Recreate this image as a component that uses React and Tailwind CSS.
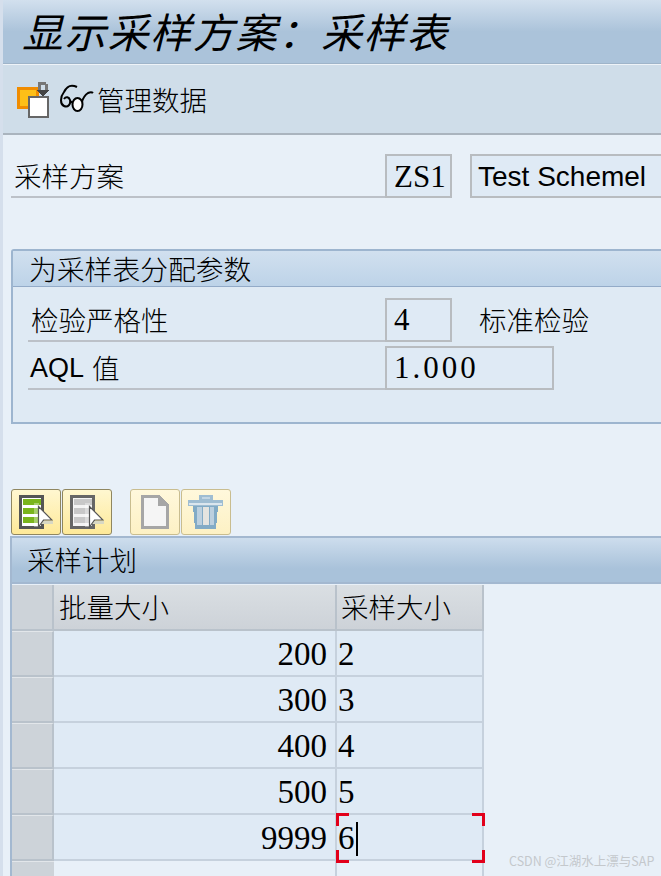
const cjk = { fontFamily: '"Noto Sans CJK SC", sans-serif' };

function Cjk({ className = "", children }) {
  return (
    <span className={`font-['Noto_Sans_CJK_SC',sans-serif] font-light ${className}`}>{children}</span>
  );
}

function CreateIcon() {
  return (
    <svg width="36" height="37" viewBox="0 0 36 37" shapeRendering="crispEdges" className="shrink-0">
      <rect x="2" y="7" width="19" height="19" fill="#fdbf17" stroke="#f08c00" strokeWidth="3" />
      <rect x="13" y="16" width="19" height="20" fill="#fff" stroke="#666" strokeWidth="2.5" />
      <path d="M22 1h8v2h2v6h-3V4h-4v5h-3V3h0z" fill="#777" />
      <path d="M20 9h13l-6 6z" fill="#444" />
    </svg>
  );
}

function GlassesIcon() {
  return (
    <svg width="36" height="30" viewBox="0 0 36 30" fill="none" stroke="#000" strokeWidth="2" className="shrink-0">
      <path d="M18 3C12 0 8 2 5 8C1 13 1 20 5 22C9 24 12 20 11 16C10 13 7 12 5 15" />
      <path d="M11 17l3 2" />
      <ellipse cx="18.5" cy="20.5" rx="5" ry="6.5" fill="#fff" />
      <path d="M23 18c1-4 3-7 6-9 2-1 4-1 5 0" />
    </svg>
  );
}

function TableIcon({ green }) {
  const bar = green ? "#7ab51d" : "#c8c8c8";
  return (
    <svg width="34" height="34" viewBox="0 0 34 34" shapeRendering="crispEdges">
      <rect x="1.25" y="1.25" width="22" height="31" fill={green ? "#fff" : "#f4f4f4"} stroke={green ? "#555" : "#666"} strokeWidth="2.5" />
      <rect x="4" y="4" width="18" height="6" fill={bar} />
      <rect x="4" y="13" width="18" height="6" fill={bar} />
      <rect x="4" y="22" width="18" height="6" fill={bar} />
      <rect x="15" y="8" width="5" height="24" fill="#fff" opacity="0.35" />
      <path d="M22 26h12v3H22z" fill="#d8d8c4" />
      <path d="M19.5 11.5L33 25H24.5L19.5 32Z" fill="#fff" stroke="#555" strokeWidth="1.2" shapeRendering="auto" />
    </svg>
  );
}

function PageIcon() {
  return (
    <svg width="28" height="34" viewBox="0 0 28 34" shapeRendering="crispEdges">
      <path d="M1.5 1.5h16l9 9v22h-25z" fill="#f5f5f5" stroke="#a6a6a6" strokeWidth="3" />
      <path d="M17 2v9h9z" fill="#a6a6a6" />
    </svg>
  );
}

function TrashIcon() {
  return (
    <svg width="36" height="34" viewBox="0 0 36 34" shapeRendering="crispEdges">
      <path d="M11 0h14v5H11z" fill="#9fbdd2" />
      <rect x="14" y="2" width="8" height="2" fill="#c3d6e4" />
      <rect x="0" y="5" width="35" height="6" fill="#9fbdd2" />
      <rect x="1" y="8" width="33" height="2" fill="#dbe6ee" />
      <path d="M5 11h25l-2 23H7z" fill="#82abc6" />
      <rect x="9" y="12" width="5" height="18" fill="#bcd0df" />
      <rect x="15" y="12" width="6" height="18" fill="#e4e4e0" />
      <rect x="22" y="12" width="4" height="18" fill="#bcd0df" />
    </svg>
  );
}

function ToolButton({ faded, children, className = "" }) {
  return (
    <div
      className={`w-[50px] h-[46px] flex items-center justify-center rounded-[3px] border ${
        faded
          ? "border-[#c9bd8f] bg-gradient-to-b from-[#fff8dc] to-[#fdf1c4]"
          : "border-[#8f8660] bg-gradient-to-b from-[#fff7d0] to-[#fee998]"
      } ${className}`}
    >
      {children}
    </div>
  );
}

function Field({ w, children, className = "" }) {
  return (
    <div
      className={`h-[44px] shrink-0 border-2 border-[#b8bcc0] bg-[#dfeaf5] flex items-center text-black overflow-hidden ${className}`}
      style={{ width: w }}
    >
      {children}
    </div>
  );
}

function DataRow({ a, b, focused }) {
  return (
    <div className="flex h-[46px] relative">
      <div className="w-[42px] shrink-0 bg-[#cdd3d9] border-r-2 border-b-2 border-[#b9c2cb] border-t border-t-[#e2e6ea]" />
      <div className="w-[283px] shrink-0 bg-[#dfeaf5] border-r-2 border-b-2 border-[#c6d1dd] flex items-center justify-end pr-[8px] pt-[3px] font-['Liberation_Serif',serif] text-[33px] text-black">
        {a}
      </div>
      <div className="w-[147px] shrink-0 bg-[#dfeaf5] border-r-2 border-b-2 border-[#c6d1dd] flex items-center pl-[1px] pt-[3px] font-['Liberation_Serif',serif] text-[33px] text-black">
        {b}
        {focused && <span className="w-[2px] h-[34px] bg-black ml-[1px]" />}
      </div>
      {focused && (
        <>
          <span className="absolute left-[324px] -top-[2px] w-[13px] h-[3px] bg-[#e2001a]" />
          <span className="absolute left-[324px] -top-[2px] w-[3px] h-[13px] bg-[#e2001a]" />
          <span className="absolute left-[460px] -top-[2px] w-[13px] h-[3px] bg-[#e2001a]" />
          <span className="absolute left-[470px] -top-[2px] w-[3px] h-[13px] bg-[#e2001a]" />
          <span className="absolute left-[324px] top-[45px] w-[13px] h-[3px] bg-[#e2001a]" />
          <span className="absolute left-[324px] top-[35px] w-[3px] h-[13px] bg-[#e2001a]" />
          <span className="absolute left-[460px] top-[45px] w-[13px] h-[3px] bg-[#e2001a]" />
          <span className="absolute left-[470px] top-[35px] w-[3px] h-[13px] bg-[#e2001a]" />
        </>
      )}
    </div>
  );
}

export default function App() {
  return (
    <div className="relative w-[661px] h-[876px] overflow-hidden bg-[#e8f0f8] border-l-[3px] border-l-[#d5dfec]" style={cjk}>
      {/* Title */}
      <div className="h-[64px] bg-[linear-gradient(#d2e0ee,#abc3da_50%,#abc3da)] flex items-center pl-[19px] border-b border-[#9fb4c9]">
        <Cjk className="text-[41px] italic text-black leading-none tracking-[1.7px] -mt-[3px] font-normal whitespace-nowrap">显示采样方案：采样表</Cjk>
      </div>
      {/* Toolbar */}
      <div className="h-[71px] bg-[#cfdde9] border-t border-t-[#eef3f8] border-b-2 border-b-[#aab4be] flex items-center pl-[13px]">
        <CreateIcon />
        <span className="ml-[7px] shrink-0"><GlassesIcon /></span>
        <Cjk className="ml-[2px] mt-[2px] text-[27.5px] text-black leading-none">管理数据</Cjk>
      </div>

      {/* Scheme row */}
      <div className="mt-[19px] ml-[8px] flex items-end h-[44px]">
        <div className="w-[374px] shrink-0 h-[44px] border-b-2 border-[#bcc1c8] flex items-center pl-[3px]">
          <Cjk className="text-[27.5px] text-black leading-none mt-[2px]">采样方案</Cjk>
        </div>
        <Field w={67} className="pl-[7px] pt-[2px] font-['Liberation_Serif',serif] text-[31px] font-light">ZS1</Field>
        <Field w={200} className="ml-[18px] pl-[6px] pt-[2px] font-['Liberation_Sans',sans-serif] text-[28px]">Test Schemel</Field>
      </div>

      {/* Group */}
      <div className="mt-[51px] ml-[8px] w-[660px] h-[175px] border-2 border-[#9db5cf] rounded-tl-[3px] bg-[#dfeaf4]">
        <div className="h-[36px] border-b border-[#93abc8] bg-[linear-gradient(#d1e0ef,#bdd3e8)] flex items-center pl-[16px]">
          <Cjk className="text-[27.8px] text-black leading-none">为采样表分配参数</Cjk>
        </div>
        <div className="mt-[11px] ml-[15px] flex items-start h-[44px]">
          <div className="w-[357px] shrink-0 h-[44px] border-b-2 border-[#bcc1c8] flex items-center pl-[3px]">
            <Cjk className="text-[27.5px] text-black leading-none mt-[2px]">检验严格性</Cjk>
          </div>
          <Field w={67} className="pl-[7px] font-['Liberation_Serif',serif] text-[31px]">4</Field>
          <Cjk className="ml-[27px] mt-[8px] text-[27.5px] text-black leading-none">标准检验</Cjk>
        </div>
        <div className="mt-[4px] ml-[15px] flex items-start h-[44px]">
          <div className="w-[357px] shrink-0 h-[44px] border-b-2 border-[#bcc1c8] flex items-center pl-[2px] pt-[2px]">
            <span className="font-['Liberation_Sans',sans-serif] text-[27px] text-black leading-none">AQL</span>
            <Cjk className="ml-[8px] text-[27.5px] text-black leading-none">值</Cjk>
          </div>
          <Field w={169} className="pl-[7px] font-['Liberation_Serif',serif] text-[31px] tracking-[3px]">1.000</Field>
        </div>
      </div>

      {/* Action buttons */}
      <div className="mt-[65px] ml-[8px] flex h-[46px]">
        <ToolButton><TableIcon green /></ToolButton>
        <ToolButton className="ml-[1px]"><TableIcon /></ToolButton>
        <ToolButton faded className="ml-[18px]"><PageIcon /></ToolButton>
        <ToolButton faded className="ml-[1px]"><TrashIcon /></ToolButton>
      </div>

      {/* Table */}
      <div className="mt-[1px] ml-[7px] w-[660px] border-l-2 border-t-2 border-[#a3b8d0]">
        <div className="h-[46px] bg-[linear-gradient(#cddded,#a9c2da_70%)] border-b-2 border-[#a3b8d0] flex items-center pl-[15px]">
          <Cjk className="text-[27.5px] text-black leading-none">采样计划</Cjk>
        </div>
        <div className="flex h-[46px] mt-[1px]">
          <div className="w-[42px] shrink-0 bg-[#cdd3d9] border-r-2 border-b-2 border-[#b9c2cb]" />
          <div className="w-[283px] shrink-0 bg-[linear-gradient(#dadfe3,#cdd2d8)] border-r-2 border-b-2 border-[#b9c2cb] flex items-center pl-[5px]">
            <Cjk className="text-[27.5px] text-black leading-none">批量大小</Cjk>
          </div>
          <div className="w-[147px] shrink-0 bg-[linear-gradient(#dadfe3,#cdd2d8)] border-r-2 border-b-2 border-[#b9c2cb] flex items-center pl-[4px]">
            <Cjk className="text-[27.5px] text-black leading-none">采样大小</Cjk>
          </div>
        </div>
        <DataRow a="200" b="2" />
        <DataRow a="300" b="3" />
        <DataRow a="400" b="4" />
        <DataRow a="500" b="5" />
        <DataRow a="9999" b="6" focused />
        <div className="flex h-[46px]">
          <div className="w-[42px] shrink-0 bg-[#cdd3d9] border-t border-t-[#e2e6ea]" />
          <div className="w-[283px] shrink-0 border-r-2 border-[#c6d1dd]" />
          <div className="w-[147px] shrink-0 border-r-2 border-[#c6d1dd]" />
        </div>
      </div>

      {/* Watermark */}
      <span className="absolute left-[506px] top-[855px] text-[12.5px] leading-none text-[#c4c8cc] whitespace-nowrap">CSDN @江湖水上漂与SAP</span>
    </div>
  );
}
